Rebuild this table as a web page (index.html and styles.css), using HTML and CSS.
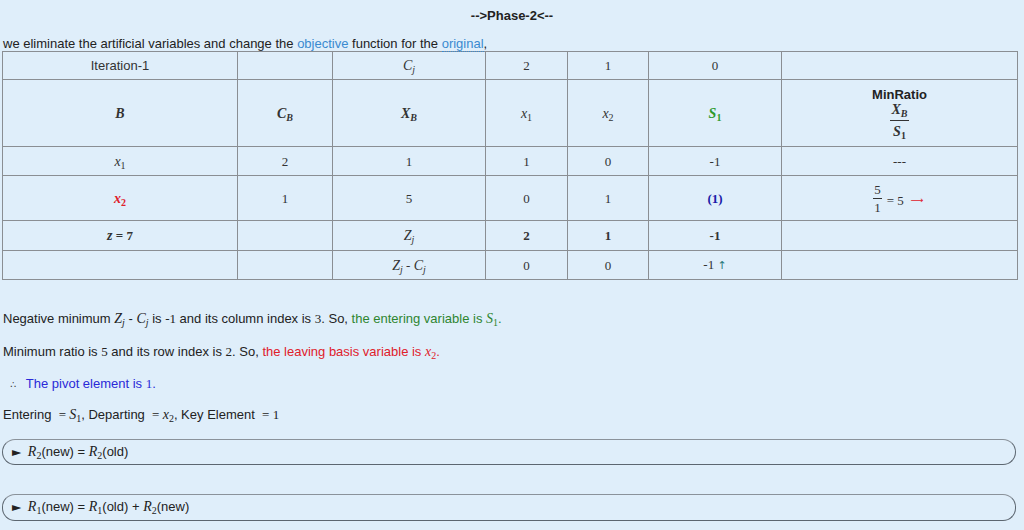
FILE: index.html
```html
<!DOCTYPE html>
<html>
<head>
<meta charset="utf-8">
<link rel="stylesheet" href="styles.css">
</head>
<body>
<div class="phase">--&gt;Phase-2&lt;--</div>
<div class="intro">we eliminate the artificial variables and change the <span class="link">objective</span> function for the <span class="link dotted">original</span>,</div>
<table class="simplex">
  <colgroup>
    <col class="c1"><col class="c2"><col class="c3"><col class="c4"><col class="c5"><col class="c6"><col class="c7">
  </colgroup>
  <tr class="r1">
    <td class="sans">Iteration-1</td>
    <td></td>
    <td><i class="m">C<sub>j</sub></i></td>
    <td class="num">2</td>
    <td class="num">1</td>
    <td class="num">0</td>
    <td></td>
  </tr>
  <tr class="r2">
    <td><b><i class="m">B</i></b></td>
    <td><b><i class="m">C<sub>B</sub></i></b></td>
    <td><b><i class="m">X<sub>B</sub></i></b></td>
    <td><i class="m">x<sub class="up">1</sub></i></td>
    <td><i class="m">x<sub class="up">2</sub></i></td>
    <td><b><i class="m green">S<sub class="up">1</sub></i></b></td>
    <td>
      <div class="minratio">
        <b class="sans">MinRatio</b>
        <span class="frac"><b class="numer"><i class="m">X<sub>B</sub></i></b><b class="denom"><i class="m">S<sub class="up">1</sub></i></b></span>
      </div>
    </td>
  </tr>
  <tr class="r3">
    <td><i class="m">x<sub class="up">1</sub></i></td>
    <td class="num">2</td>
    <td class="num">1</td>
    <td class="num">1</td>
    <td class="num">0</td>
    <td class="num">-1</td>
    <td class="num">---</td>
  </tr>
  <tr class="r4">
    <td><b><i class="m red">x<sub class="up">2</sub></i></b></td>
    <td class="num">1</td>
    <td class="num">5</td>
    <td class="num">0</td>
    <td class="num">1</td>
    <td class="num"><b class="pivot">(1)</b></td>
    <td class="num"><span class="ratio"><span class="frac small"><span class="numer">5</span><span class="denom">1</span></span><span>= 5</span><span class="red rarrow">&#10230;</span></span></td>
  </tr>
  <tr class="r5">
    <td><b><i class="m">z</i></b><b class="num"> = 7</b></td>
    <td></td>
    <td><i class="m">Z<sub>j</sub></i></td>
    <td class="num"><b>2</b></td>
    <td class="num"><b>1</b></td>
    <td class="num"><b>-1</b></td>
    <td></td>
  </tr>
  <tr class="r6">
    <td></td>
    <td></td>
    <td><i class="m">Z<sub>j</sub></i><span class="num"> - </span><i class="m">C<sub>j</sub></i></td>
    <td class="num">0</td>
    <td class="num">0</td>
    <td class="num">-1 <span class="arrow">&#8593;</span></td>
    <td></td>
  </tr>
</table>

<p class="p1">Negative minimum <i class="m">Z<sub>j</sub></i> - <i class="m">C<sub>j</sub></i> is <span class="num">-1</span> and its column index is <span class="num">3</span>. So, <span class="green2">the entering variable is <i class="m">S<sub class="up">1</sub></i>.</span></p>
<p class="p2">Minimum ratio is <span class="num">5</span> and its row index is <span class="num">2</span>. So, <span class="red2">the leaving basis variable is <i class="m">x<sub class="up">2</sub></i>.</span></p>
<p class="p3"><span class="therefore">&#8756;</span> <span class="blue">The pivot element is <span class="num">1</span>.</span></p>
<p class="p4">Entering &nbsp;<span class="num">= </span><i class="m">S<sub class="up">1</sub></i>, Departing &nbsp;<span class="num">= </span><i class="m">x<sub class="up">2</sub></i>, Key Element &nbsp;<span class="num">= 1</span></p>

<details class="step s1">
  <summary><span class="tri">&#9658;</span> <i class="m">R<sub class="up">2</sub></i>(new) = <i class="m">R<sub class="up">2</sub></i>(old)</summary>
</details>
<details class="step s2">
  <summary><span class="tri">&#9658;</span> <i class="m">R<sub class="up">1</sub></i>(new) = <i class="m">R<sub class="up">1</sub></i>(old) + <i class="m">R<sub class="up">2</sub></i>(new)</summary>
</details>
</body>
</html>
```

FILE: styles.css
```css
html, body {
  margin: 0;
  padding: 0;
  background: #dfeefa;
}
body {
  font-family: "Liberation Sans", Arial, sans-serif;
  font-size: 13px;
  line-height: 15px;
  color: #222;
  padding: 0 2px;
  width: 1016px;
}
.phase {
  margin-top: 8px;
  text-align: center;
  font-weight: bold;
  color: #222;
  padding-left: 4px;
}
.intro {
  margin-top: 13px;
  padding-left: 1px;
  white-space: nowrap;
}
.link {
  color: #3a8ad0;
}
.dotted {
  border-bottom: 1px dotted #3a8ad0;
}
.m {
  font-family: "Liberation Serif", "Times New Roman", serif;
  font-style: italic;
  font-size: 14px;
}
.m sub {
  font-size: 10px;
  vertical-align: -3px;
  line-height: 0;
}
.m sub.up {
  font-style: normal;
}
.num {
  font-family: "Liberation Serif", "Times New Roman", serif;
  font-size: 13px;
}
.sans {
  font-family: "Liberation Sans", Arial, sans-serif;
}
.green { color: #2e9a2e; }
.red { color: #e0202a; }
.green2 { color: #2e8530; }
.red2 { color: #e0202a; }
.blue { color: #2a2ad8; }
.pivot {
  color: #1a1aa8;
  font-family: "Liberation Serif", serif;
}

.simplex {
  border-collapse: collapse;
  border: 1px solid #333;
  width: 1016px;
  table-layout: fixed;
  margin-top: 0;
}
.simplex td {
  border: 1px solid #8a8e93;
  text-align: center;
  vertical-align: middle;
  padding: 0;
  color: #333;
}
.c1 { width: 235px; }
.c2 { width: 95px; }
.c3 { width: 153px; }
.c4 { width: 82px; }
.c5 { width: 81px; }
.c6 { width: 133px; }
.c7 { width: 236px; }
.r1 td { height: 27px; }
.r2 td { height: 66px; }
.r3 td { height: 28px; }
.r4 td { height: 44px; }
.r5 td { height: 29px; }
.r6 td { height: 28px; }

.minratio {
  display: inline-flex;
  flex-direction: column;
  align-items: center;
  margin-top: -6px;
}
.minratio .sans {
  color: #222;
  line-height: 13px;
}
.frac {
  display: inline-flex;
  flex-direction: column;
  align-items: center;
  vertical-align: middle;
}
.frac .numer {
  border-bottom: 1px solid #333;
  padding: 1px 1px 3px;
  line-height: 15px;
}
.frac .denom {
  padding: 3px 1px 0;
  line-height: 15px;
}
.frac.small .numer,
.frac.small .denom {
  font-size: 13px;
  line-height: 14px;
  padding: 0 1px;
}
.frac.small .numer {
  padding-bottom: 1px;
}
.frac.small .denom {
  padding-top: 2px;
}
.ratio {
  display: inline-flex;
  align-items: center;
  gap: 5px;
  margin-left: -2px;
  margin-top: -3px;
}
.ratio > span:nth-child(2) {
  margin-top: 4px;
}
.arrow {
  color: #2a7a7a;
  font-family: "DejaVu Sans", sans-serif;
  font-size: 11px;
}
.rarrow {
  font-family: "DejaVu Sans", sans-serif;
  font-size: 9px;
  margin-left: 2px;
  margin-top: 4px;
}

p {
  margin: 0;
  padding-left: 1px;
  white-space: nowrap;
}
.p1 { margin-top: 31px; }
.p2 { margin-top: 18px; }
.p3 { margin-top: 17px; padding-left: 8px; }
.p4 { margin-top: 15px; }
.therefore {
  font-family: "DejaVu Sans", sans-serif;
  font-size: 10px;
  margin-right: 6px;
  color: #333;
}

.step {
  border: 1px solid #5c6670;
  border-top-color: #8a929a;
  border-radius: 13px;
  box-sizing: border-box;
  width: 1014px;
}
.step summary {
  list-style: none;
  padding: 4px 0 0 9px;
  line-height: 15px;
  color: #222;
  white-space: nowrap;
}
.step summary::-webkit-details-marker { display: none; }
.tri {
  font-family: "DejaVu Sans", sans-serif;
  font-size: 12px;
  margin-right: 3px;
}
.s1 { margin-top: 17px; height: 26px; }
.s2 { margin-top: 29px; height: 27px; }
```
